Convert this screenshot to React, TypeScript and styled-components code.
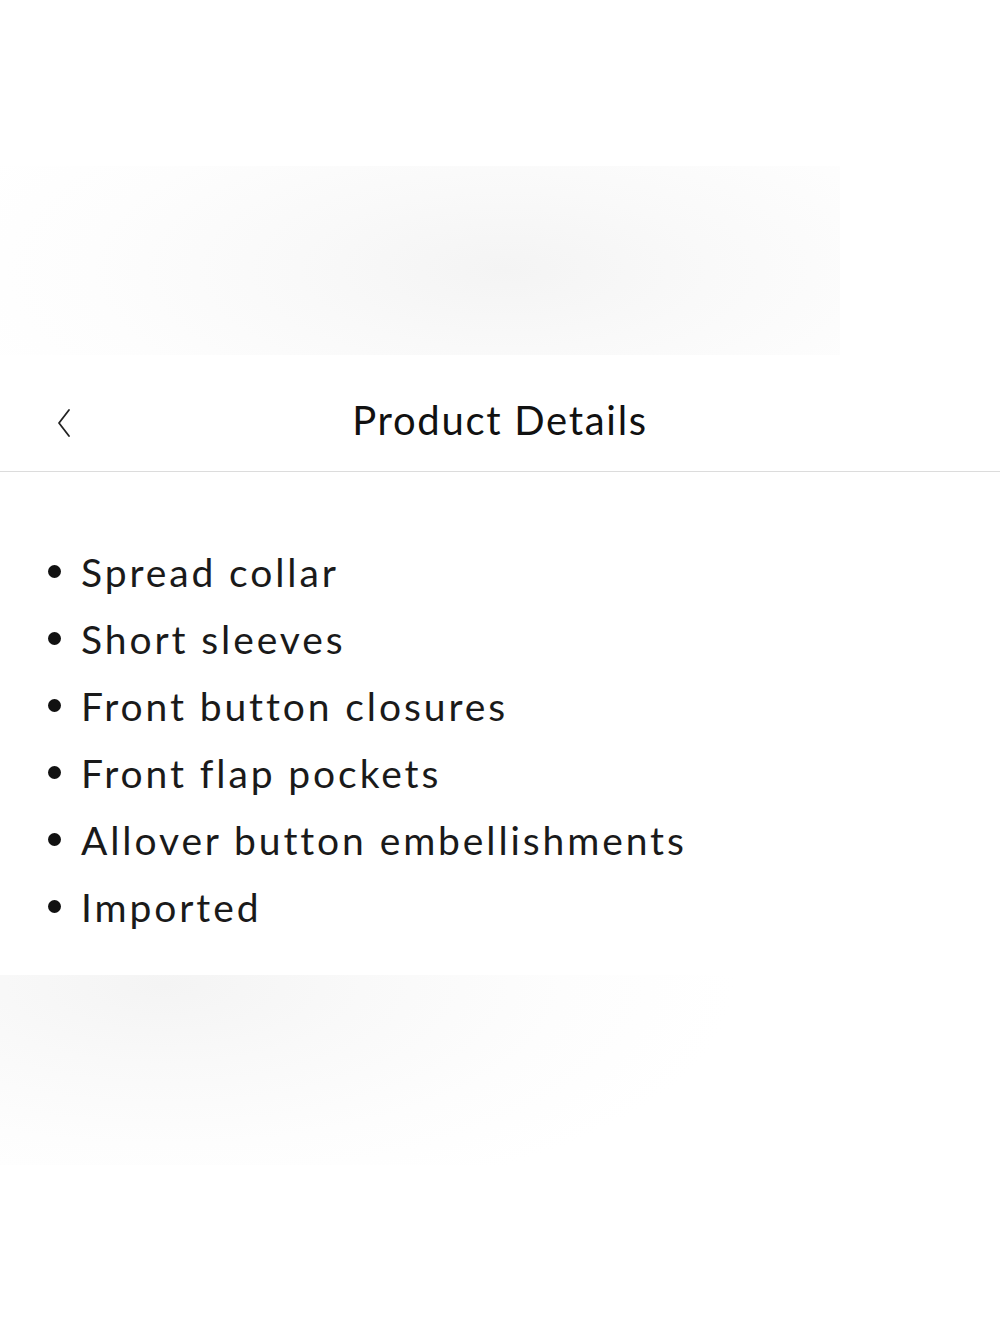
import styled, { createGlobalStyle } from 'styled-components';

const GlobalStyle = createGlobalStyle`
    html, body {
        margin: 0;
        padding: 0;
        background: #ffffff;
    }
    body {
        font-family: Lato, "Noto Sans", sans-serif;
        color: #111111;
    }
`

const Page = styled.div`
    width: 1000px;
    min-height: 1333px;
    display: flex;
    flex-direction: column;
    background: #ffffff;
`

const Haze = styled.div<{ $top: number; $height: number; $width: number; $cx: string; $cy: string }>`
    margin-top: ${(p) => p.$top}px;
    height: ${(p) => p.$height}px;
    width: ${(p) => p.$width}px;
    background: radial-gradient(ellipse 70% 120% at ${(p) => p.$cx} ${(p) => p.$cy}, #f4f4f4 0%, #f9f9f9 35%, #fdfdfd 70%, #ffffff 100%);
`

const Header = styled.div`
    height: 116px;
    display: grid;
    grid-template-columns: 130px 1fr 130px;
    align-items: center;
    border-bottom: 1px solid #dcdcdc;
`

const BackButton = styled.button`
    border: none;
    background: none;
    padding: 20px 0 0 54px;
    display: flex;
    align-items: center;
    justify-self: start;
    cursor: pointer;
`

const Title = styled.h1`
    margin: 0;
    text-align: center;
    font-size: 40px;
    font-weight: 400;
    letter-spacing: 1.7px;
    color: #111;
    padding-top: 14px;
`

const List = styled.ul`
    list-style: none;
    margin: 0;
    padding: 66px 0 35px 48px;
`

const Item = styled.li`
    display: flex;
    align-items: center;
    height: 67px;
    font-size: 39px;
    letter-spacing: 2.9px;
    color: #1a1a1a;

    &::before {
        content: '';
        width: 13px;
        height: 13px;
        border-radius: 50%;
        background: #111;
        margin-right: 20px;
        flex-shrink: 0;
    }
`

const details = ['Spread collar', 'Short sleeves', 'Front button closures', 'Front flap pockets', 'Allover button embellishments', 'Imported'];

const App = () => {
    return (
        <>
            <GlobalStyle />
            <Page>
                <Haze $top={166} $height={189} $width={840} $cx="60%" $cy="55%" />
                <Header>
                    <BackButton aria-label="Back">
                        <svg width="18" height="30" viewBox="0 0 18 30" fill="none">
                            <path d="M15 2 L5 15 L15 28" stroke="#222" strokeWidth="1.8" strokeLinecap="round" strokeLinejoin="round" />
                        </svg>
                    </BackButton>
                    <Title>Product Details</Title>
                    <div />
                </Header>
                <List>
                    {
                        details.map((d) => (
                            <Item key={d}>{ d }</Item>
                        ))
                    }
                </List>
                <Haze $top={0} $height={190} $width={815} $cx="20%" $cy="5%" />
            </Page>
        </>
    )
}

export default App
